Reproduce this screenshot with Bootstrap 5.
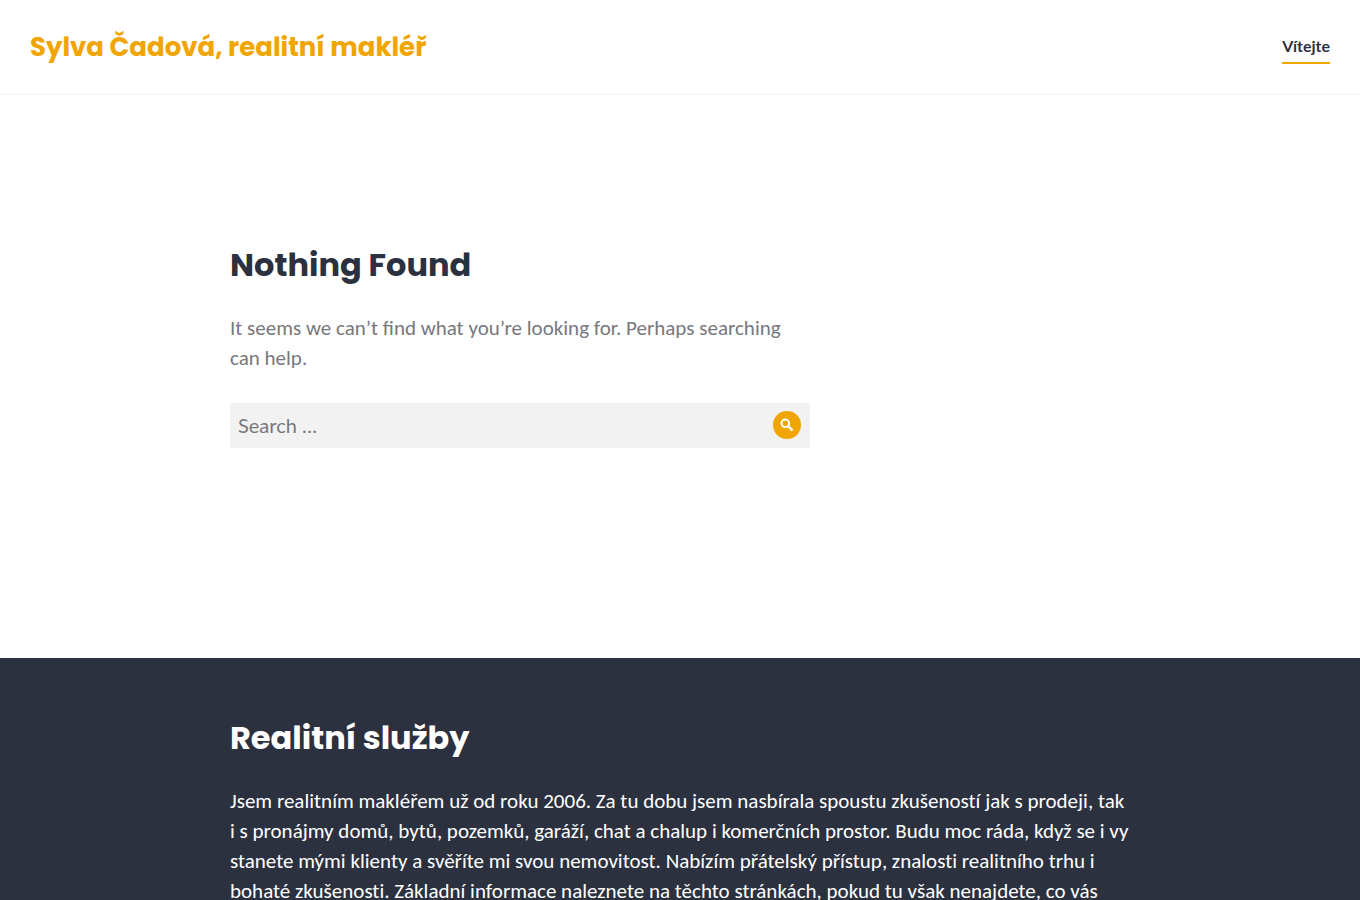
<!DOCTYPE html>
<html lang="cs">
<head>
<meta charset="utf-8">
<meta name="viewport" content="width=device-width, initial-scale=1">
<title>Sylva Čadová, realitní makléř</title>
<link href="https://cdn.jsdelivr.net/npm/bootstrap@5.3.0/dist/css/bootstrap.min.css" rel="stylesheet">
<style>
  :root { --accent: #f0a500; --ink: #2c313f; }
  body { font-family: Carlito, Lato, sans-serif; font-size: 21px; line-height: 30px; color: #77787d; background: #fff; }
  .site-header { padding: 24px 30px; border-bottom: 1px solid #f2f2f2; }
  .site-title, .section-title { font-family: Poppins, sans-serif; font-weight: 700; }
  .site-title { font-size: 26px; line-height: 46px; color: var(--accent); }
  .section-title { font-size: 32px; line-height: 40px; margin-bottom: 28px; }
  .main-link { font-family: Lato, sans-serif; font-size: 16px; line-height: 24px; padding: 4px 0; color: var(--ink); border-bottom: 2px solid var(--accent); }
  .page-column { max-width: 900px; }
  .main-area { padding: 150px 0 210px; }
  .main-area .section-title { color: var(--ink); }
  .text-column { max-width: 580px; }
  .search-form { margin-top: 30px; }
  .search-form .form-control { height: 45px; padding: 7px 48px 8px 8px; font-family: Lato, sans-serif; font-size: 20px; line-height: 30px; background: #f2f2f2; color: #77787d; }
  .search-form .form-control::placeholder { color: #77787d; }
  .search-button { width: 28px; height: 28px; right: 9px; top: 8px; background: var(--accent); }
  .services { background: var(--ink); padding: 60px 0; font-variant-ligatures: none; }
</style>
</head>
<body>
<header class="site-header d-flex justify-content-between align-items-center">
  <a class="site-title text-decoration-none" href="#">Sylva Čadová, realitní makléř</a>
  <nav class="d-flex" aria-label="Menu"><a class="main-link text-decoration-none fw-bold" href="#" aria-current="page">Vítejte</a></nav>
</header>
<main class="main-area">
  <div class="page-column mx-auto">
    <div class="text-column">
      <h1 class="section-title">Nothing Found</h1>
      <p class="mb-0">It seems we can’t find what you’re looking for. Perhaps searching can help.</p>
      <form class="search-form" role="search">
        <div class="position-relative">
          <input class="form-control border-0 rounded-0" id="search" type="search" placeholder="Search …" aria-label="Search">
          <button class="search-button position-absolute btn border-0 rounded-circle p-0 d-flex align-items-center justify-content-center" type="submit" aria-label="Search">
            <svg width="14" height="14" viewBox="0 0 14 14" fill="none" stroke="#fff" stroke-width="2" aria-hidden="true"><circle cx="5.3" cy="5.3" r="3.8"/><path d="M8.2 8.2 12.6 12.6" stroke-width="2.4"/></svg>
          </button>
        </div>
      </form>
    </div>
  </div>
</main>
<footer class="services text-white">
  <div class="page-column mx-auto">
    <h2 class="section-title">Realitní služby</h2>
    <p class="mb-0">Jsem realitním makléřem už od roku 2006. Za tu dobu jsem nasbírala spoustu zkušeností jak s prodeji, tak i s pronájmy domů, bytů, pozemků, garáží, chat a chalup i komerčních prostor. Budu moc ráda, když se i vy stanete mými klienty a svěříte mi svou nemovitost. Nabízím přátelský přístup, znalosti realitního trhu i bohaté zkušenosti. Základní informace naleznete na těchto stránkách, pokud tu však nenajdete, co vás</p>
  </div>
</footer>
<script src="https://cdn.jsdelivr.net/npm/bootstrap@5.3.0/dist/js/bootstrap.bundle.min.js"></script>
</body>
</html>
